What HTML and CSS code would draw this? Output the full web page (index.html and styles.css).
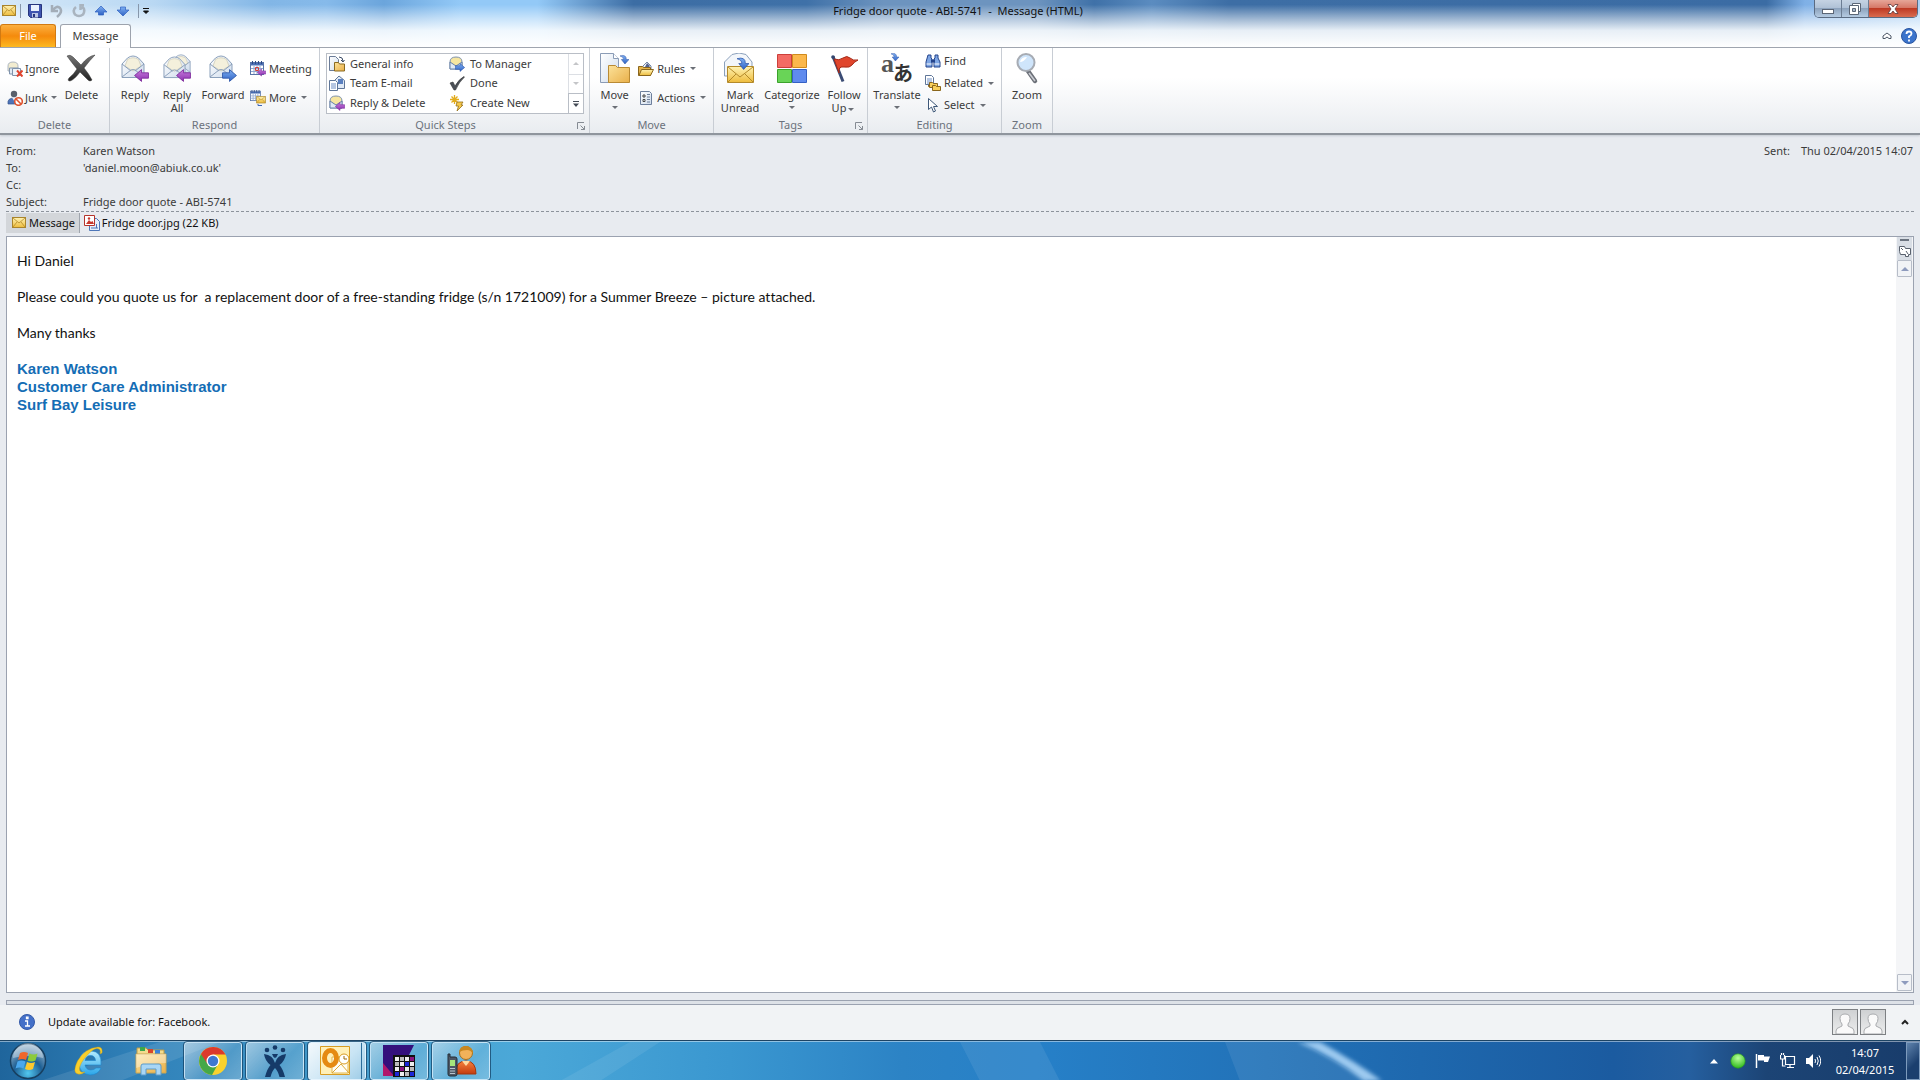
FILE: index.html
```html
<!DOCTYPE html>
<html lang="en">
<head>
<meta charset="utf-8">
<title>Fridge door quote - ABI-5741 - Message (HTML)</title>
<link rel="stylesheet" href="styles.css">
</head>
<body>
<svg class="defs" width="0" height="0" aria-hidden="true">
  <defs>
    <linearGradient id="gold" x1="0" y1="0" x2="0" y2="1"><stop offset="0" stop-color="#fff3b4"/><stop offset="1" stop-color="#eebc3c"/></linearGradient>
    <linearGradient id="folder" x1="0" y1="0" x2="1" y2="1"><stop offset="0" stop-color="#fce29a"/><stop offset="1" stop-color="#e9b04a"/></linearGradient>
    <linearGradient id="paper" x1="0" y1="0" x2="1" y2="1"><stop offset="0" stop-color="#ffffff"/><stop offset="1" stop-color="#cfdcec"/></linearGradient>
    <linearGradient id="purple" x1="0" y1="0" x2="0" y2="1"><stop offset="0" stop-color="#c77ddb"/><stop offset="1" stop-color="#8b2fb0"/></linearGradient>
    <linearGradient id="blue" x1="0" y1="0" x2="0" y2="1"><stop offset="0" stop-color="#7fb0f2"/><stop offset="1" stop-color="#2f62c4"/></linearGradient>
    <linearGradient id="dark" x1="0" y1="0" x2="0" y2="1"><stop offset="0" stop-color="#777"/><stop offset="1" stop-color="#222"/></linearGradient>
    <radialGradient id="orb" cx=".5" cy=".85" r=".8"><stop offset="0" stop-color="#52c8f0"/><stop offset=".5" stop-color="#1d5f94"/><stop offset="1" stop-color="#9db9cf"/></radialGradient>
    <linearGradient id="ie" x1="0" y1="0" x2="0" y2="1"><stop offset="0" stop-color="#b5ecff"/><stop offset="1" stop-color="#2aa5e8"/></linearGradient>
    <radialGradient id="green" cx=".5" cy=".3" r=".7"><stop offset="0" stop-color="#b8ff9a"/><stop offset="1" stop-color="#2fb91c"/></radialGradient>
    <linearGradient id="person" x1="0" y1="0" x2="0" y2="1"><stop offset="0" stop-color="#f5813c"/><stop offset="1" stop-color="#c43c10"/></linearGradient>
    <symbol id="envelope" viewBox="0 0 14 12"><rect x=".5" y=".5" width="13" height="10" fill="url(#gold)" stroke="#a9842c"/><path d="M1 1l6 5 6-5M1 10l4-5M13 10l-4-5" fill="none" stroke="#b48a2a" stroke-width=".8"/></symbol>
    <symbol id="open-mail" viewBox="0 0 24 24"><path d="M1 9L6.500 3Q12-1 17.500 3L23 9V22.500H1z" fill="url(#paper)" stroke="#8ba0bb"/><path d="M4 11L6.500 4.500Q12 1 17.500 4.500L20 11l-8 5z" fill="#f4f0dc" stroke="#c9c7b4" stroke-width=".7"/><path d="M1 9l9 7M23 9l-9 7M1 22l9-7q2-1 4 0l9 7" fill="none" stroke="#8ba0bb"/></symbol>
    <symbol id="arrow-left" viewBox="0 0 14 12"><path d="M.5 6L7 .5V3.500H13.500V8.500H7V11.500z" fill="url(#purple)" stroke="#7d2a9c" stroke-width=".8"/></symbol>
    <symbol id="arrow-right" viewBox="0 0 14 12"><path d="M13.500 6L7 .5V3.500H.5V8.500H7V11.500z" fill="url(#blue)" stroke="#2c55a8" stroke-width=".8"/></symbol>
    <symbol id="curl" viewBox="0 0 10 10"><path d="M0 1Q7-1 7 5h3L5.500 10 1.500 5H4Q4 2 0 1z" fill="url(#blue)" stroke="#2c55a8" stroke-width=".6"/></symbol>
    <symbol id="calendar" viewBox="0 0 14 14"><rect x=".5" y="1.500" width="13" height="12" fill="#fff" stroke="#5874a8"/><path d="M1 2h12v2.500H1z" fill="#4a6fb4"/><path d="M2.500 0v3M5.500 0v3M8.500 0v3M11.500 0v3" stroke="#2d4a86"/><path d="M1 7.500h12M1 10.500h12M4 5v8M7 5v8M10 5v8" stroke="#91a8d0"/></symbol>
    <symbol id="launcher" viewBox="0 0 8 8"><path d="M.5 7V.5H7M3.500 3.500l4 4M7.500 4v3.500H4" fill="none" stroke="#858b93"/></symbol>
    <symbol id="avatar" viewBox="0 0 24 24"><path d="M3 24v-3q0-3 4-4l2-1v-2Q7 12 7 8.500 7 4 12 4t5 4.500Q17 12 15 14v2l2 1q4 1 4 4v3z" fill="#fafafa" stroke="#a9abae"/></symbol>
  </defs>
</svg>

<header class="titlebar">
  <div class="caption">
    <div class="quick-access">
      <svg class="qi mail" viewBox="0 0 14 12"><use href="#envelope"/></svg>
      <span class="sep"></span>
      <button aria-label="Save"><svg class="qi" viewBox="0 0 14 14"><path d="M.5.500h13v13h-11l-2-2z" fill="#3f55b0" stroke="#27357c"/><path d="M3 1h8v6H3z" fill="#eaf2fd"/><path d="M4 9h6v4.500H4z" fill="#bcc8e6"/><path d="M5 10h2v3H5z" fill="#27357c"/></svg></button>
      <button aria-label="Undo"><svg class="qi" viewBox="0 0 14 14"><path d="M2 1v6h6M3 6q4-5 7-2 3 4-3 9" fill="none" stroke="#a3adb8" stroke-width="2.500"/></svg></button>
      <button aria-label="Repeat"><svg class="qi" viewBox="0 0 14 14"><path d="M4 3Q0 6 3 10.500q4 3 8 0 3-5-1-8M12 1H8.500v5" fill="none" stroke="#a9b4bf" stroke-width="2.500"/></svg></button>
      <button aria-label="Previous item"><svg class="qi" viewBox="0 0 14 14"><path d="M7 2l6 6H9.500v3h-5V8H1z" fill="url(#blue)" stroke="#2c5fc0" stroke-width=".7"/></svg></button>
      <button aria-label="Next item"><svg class="qi" viewBox="0 0 14 14"><path d="M7 12L1 6h3.500V3h5v3H13z" fill="url(#blue)" stroke="#2c5fc0" stroke-width=".7"/></svg></button>
      <span class="sep"></span>
      <button class="narrow" aria-label="Customize toolbar"><svg width="8" height="8" viewBox="0 0 8 8"><path d="M1 1.500h6M1.500 4h5L4 6.500z" fill="#111" stroke="#111" stroke-width="1"/></svg></button>
    </div>
    <h1>Fridge door quote - ABI-5741  -  Message (HTML)</h1>
    <div class="window-buttons">
      <button aria-label="Minimize"><svg width="14" height="14" viewBox="0 0 14 14"><rect x="1.500" y="7.500" width="11" height="4" fill="#fff" stroke="#5b6676"/></svg></button>
      <button aria-label="Restore"><svg width="14" height="14" viewBox="0 0 14 14"><path d="M4.500 1.500h8v8h-8z" fill="#fff" stroke="#5b6676"/><path d="M1.500 3.500h9v9h-9z" fill="#fff" stroke="#5b6676"/><path d="M4.500 6.500h3v3h-3z" fill="#aab8ca" stroke="#5b6676"/></svg></button>
      <button class="close" aria-label="Close"><svg width="12" height="12" viewBox="0 0 12 12"><path d="M1 1.500h3L6 4l2-2.500h3L8 6l3 4.500H8L6 8l-2 2.500H1L4 6z" fill="#fff" stroke="#5a3a3c" stroke-width=".8"/></svg></button>
    </div>
  </div>
  <nav class="tabs">
    <button class="tab file">File</button>
    <button class="tab active">Message</button>
    <div class="tab-tools">
      <button aria-label="Minimize the ribbon"><svg width="10" height="8" viewBox="0 0 10 8"><path d="M1 4l4-3 4 3v2.500H7L5 5 3 6.500H1z" fill="#fff" stroke="#4b5666"/></svg></button>
      <button aria-label="Help"><svg width="16" height="16" viewBox="0 0 16 16"><circle cx="8" cy="8" r="7.500" fill="#3b74cc" stroke="#2a55a0"/><path d="M5.500 6q0-2.500 2.500-2.500t2.500 2.200Q10.500 7 8 8.500v1.500M8 11.500v2" fill="none" stroke="#fff" stroke-width="1.800"/></svg></button>
    </div>
  </nav>
</header>

<section class="ribbon" aria-label="Ribbon">
  <section class="group g-delete">
    <div class="tools">
      <div class="stack">
        <button class="small"><svg viewBox="0 0 16 16"><path d="M1 5q0-4 5-4t5 4v5H1z" fill="#f2ecd0" stroke="#9aa7b8" stroke-width=".8"/><path d="M2.500 7h9v6h-9z" fill="#e3ebf4" stroke="#7f93ad"/><path d="M5.500 7.500h8v7h-8z" fill="#eef3f9" stroke="#7f93ad"/><path d="M10 9.500l5.500 6M15.500 9.500l-5.500 6" stroke="#e2452f" stroke-width="2"/></svg>Ignore</button>
        <button class="small"><svg viewBox="0 0 16 16"><circle cx="7" cy="4" r="3.200" fill="#595f6b"/><path d="M1 14q-1-6 6-6 5 0 5 6z" fill="#4e74b8" stroke="#35548c" stroke-width=".7"/><path d="M5 7.500h3.500l-1 4z" fill="#e9edf4"/><circle cx="11.500" cy="11.500" r="3.800" fill="#fff" stroke="#e0532f" stroke-width="1.600"/><path d="M9 9l5 5" stroke="#e0532f" stroke-width="1.600"/></svg>Junk<i class="caret"></i></button>
      </div>
      <button class="large w44"><svg viewBox="0 0 32 32"><path d="M2 3Q5 1 8 4l8 8q7-9 14-10-5 5-11 13 5 6 8 12-2 2-4 0L15 19Q9 27 5 28q-3 0-1-3 5-4 8-9Q7 10 2 3z" fill="url(#dark)" stroke="#333" stroke-width=".5"/></svg><span>Delete</span></button>
    </div>
    <h2>Delete</h2>
  </section>
  <section class="group g-respond">
    <div class="tools">
      <button class="large w40"><svg viewBox="0 0 32 32"><use href="#open-mail" x="2" y="2" width="24" height="24"/><use href="#arrow-left" x="15" y="16" width="15" height="13"/></svg><span>Reply</span></button>
      <button class="large w44"><svg viewBox="0 0 32 32"><use href="#open-mail" x="10" y="0" width="20" height="22"/><use href="#open-mail" x="2" y="3" width="23" height="23"/><use href="#arrow-left" x="15" y="16" width="15" height="13"/></svg><span>Reply<br>All</span></button>
      <button class="large w48"><svg viewBox="0 0 32 32"><use href="#open-mail" x="2" y="2" width="24" height="24"/><use href="#arrow-right" x="15" y="16" width="15" height="13"/></svg><span>Forward</span></button>
      <div class="stack">
        <button class="small"><svg viewBox="0 0 16 16"><use href="#calendar" x="0" y="0" width="14" height="14"/><path d="M5.500 6.500h3v3h-3z" fill="none" stroke="#d03a3a"/><use href="#arrow-left" x="7" y="7" width="9" height="9"/></svg>Meeting</button>
        <button class="small"><svg viewBox="0 0 16 16"><use href="#calendar" x="0" y="0" width="11" height="11"/><use href="#envelope" x="6" y="6" width="10" height="8"/><path d="M8 14v1.500h4" fill="none" stroke="#3a66b8"/></svg>More<i class="caret"></i></button>
      </div>
    </div>
    <h2>Respond</h2>
  </section>
  <section class="group g-quick">
    <div class="tools">
      <div class="gallery">
        <div class="steps">
          <button class="small"><svg viewBox="0 0 16 16"><path d="M.5.500h6l3 3v11h-9z" fill="url(#paper)" stroke="#6b7c98"/><path d="M5.500 6.500h4l1 1.500h5v7h-10z" fill="url(#folder)" stroke="#8a6a20"/><path d="M10 1q4 0 4 4m-2-1l2 2 1.500-2" fill="none" stroke="#3a4a66"/></svg>General info</button>
          <button class="small"><svg viewBox="0 0 16 16"><path d="M5.500 5.500L10 1l5.500 4.500v8h-10z" fill="#dfe9f6" stroke="#5f7698"/><path d="M9 4h5v5H9z" fill="#5a80c0"/><path d="M.5 5.500h6l2 2v8h-8z" fill="#fff" stroke="#5f7698"/><path d="M2 9h5M2 11h5M2 13h5" stroke="#6f8fc4"/></svg>Team E-mail</button>
          <button class="small"><svg viewBox="0 0 16 16"><path d="M1 6q0-5 6-5t6 5v7H1z" fill="#f7e6a0" stroke="#7f93ad"/><path d="M1 6l6 4 6-4v7H1z" fill="#dfe9f6" stroke="#6681a8"/><use href="#arrow-left" x="6" y="7" width="10" height="9"/></svg>Reply &amp; Delete</button>
          <button class="small"><svg viewBox="0 0 16 16"><path d="M1 6q0-5 6-5t6 5v7H1z" fill="#f7e6a0" stroke="#7f93ad"/><path d="M1 6l6 4 6-4v7H1z" fill="#dfe9f6" stroke="#6681a8"/><use href="#arrow-right" x="6" y="7" width="10" height="9"/></svg>To Manager</button>
          <button class="small"><svg viewBox="0 0 16 16"><path d="M1 8l3-1 2 4q4-7 9-9.500l.5.500Q10 7 6.500 15H5z" fill="#4a4f57" stroke="#333" stroke-width=".6"/></svg>Done</button>
          <button class="small"><svg viewBox="0 0 16 16"><path d="M5.500 0v9M1 4.500h9M2.500 1.500l6 6M8.500 1.500l-6 6" stroke="#e2ac1e" stroke-width="1.300"/><path d="M8 7h6l-2 3h2l-6 6 1.500-5H7z" fill="#f5c84a" stroke="#96701a" stroke-width=".8"/></svg>Create New</button>
        </div>
        <div class="gallery-scroll">
          <button disabled aria-label="Scroll up"><i class="caret up"></i></button>
          <button disabled aria-label="Scroll down"><i class="caret"></i></button>
          <button aria-label="More quick steps"><svg width="6" height="6" viewBox="0 0 6 6"><path d="M0 0h6v1H0zM0 2.500h6L3 6z" fill="#444b55"/></svg></button>
        </div>
      </div>
    </div>
    <h2>Quick Steps</h2>
    <button class="launch" aria-label="Quick Steps options"><svg width="8" height="8"><use href="#launcher"/></svg></button>
  </section>
  <section class="group g-move">
    <div class="tools">
      <button class="large w44"><svg viewBox="0 0 32 32"><path d="M1.500.500h13l5 5v24h-18z" fill="url(#paper)" stroke="#8b9cb6"/><path d="M14.500.500v5h5" fill="#fff" stroke="#8b9cb6"/><path d="M9.500 12.500h7l2 2h12v15h-21z" fill="url(#folder)" stroke="#b98a34"/><use href="#curl" x="21" y="1" width="9" height="11"/></svg><span>Move<i class="caret below"></i></span></button>
      <div class="stack">
        <button class="small"><svg viewBox="0 0 16 16"><path d="M5 5l4-4 4 4v5H5z" fill="#f3f6fa" stroke="#7386a6"/><path d="M9 2l3 3-3 3-2-2z" fill="#53618c"/><path d="M.5 5.500h4l1 1h7v8H.5z" fill="#e5b349" stroke="#8a661c"/><path d="M1 14.500l2.500-6h12l-3 6z" fill="url(#gold)" stroke="#8a661c"/></svg>Rules<i class="caret"></i></button>
        <button class="small"><svg viewBox="0 0 16 16"><path d="M2.500 1.500h9l2 2v11h-11z" fill="url(#paper)" stroke="#6d7f9c"/><path d="M5 5h2v2H5zM5 9.500h2v2H5z" fill="#fff" stroke="#444"/><path d="M9 4.500h3M9 7h3M9 9.500h3M9 12h3" stroke="#6e7f9a"/></svg>Actions<i class="caret"></i></button>
      </div>
    </div>
    <h2>Move</h2>
  </section>
  <section class="group g-tags">
    <div class="tools">
      <button class="large w44"><svg viewBox="0 0 32 32"><path d="M.5 9L8 1.500q7-3 14 0L28 9v14H.500z" fill="#f3f6fa" stroke="#8ba0bb"/><path d="M3.500 13.500h26v16h-26z" fill="url(#gold)" stroke="#b48a2a"/><path d="M4 14l12 10 13-10M4 29l8-8M29 29l-8-8" fill="none" stroke="#b48a2a"/><use href="#curl" x="13" y="4" width="12" height="13"/></svg><span>Mark<br>Unread</span></button>
      <button class="large w60"><svg viewBox="0 0 32 32"><path d="M1.500 1.500h14v13h-14z" fill="#f36b64" stroke="#cc3f3a"/><path d="M16.500 1.500h14v13h-14z" fill="#fbb84c" stroke="#d08a1c"/><path d="M1.500 16.500h14v13h-14z" fill="#69d457" stroke="#3ba22c"/><path d="M16.500 16.500h14v13h-14z" fill="#5f8bee" stroke="#3460c4"/></svg><span>Categorize<i class="caret below"></i></span></button>
      <button class="large w44"><svg viewBox="0 0 32 32"><path d="M5 3.500l10 25" stroke="#3b4c74" stroke-width="3"/><path d="M6 6q5 2 9-1t7 0 8 2q-4 2-6 5t-8 2-5 6z" fill="#e0452c" stroke="#a52a18"/><circle cx="5" cy="4" r="1.800" fill="#33456e"/></svg><span>Follow<br>Up<i class="caret"></i></span></button>
    </div>
    <h2>Tags</h2>
    <button class="launch" aria-label="Tags options"><svg width="8" height="8"><use href="#launcher"/></svg></button>
  </section>
  <section class="group g-edit">
    <div class="tools">
      <button class="large w52"><span class="translate"><b>a</b><b class="kana">あ</b><svg class="turn" viewBox="0 0 10 8"><use href="#curl" width="10" height="8"/></svg></span><span>Translate<i class="caret below"></i></span></button>
      <div class="stack tight">
        <button class="small"><svg viewBox="0 0 16 16"><path d="M3 2h3v3l1 1v8H1V9zM10 2h3v3l2 4v5H9V6l1-1z" fill="#7ea6e4" stroke="#24448c"/><path d="M6 6.500h4v3H6z" fill="#24448c"/><path d="M1.500 11h5M9.500 11h5" stroke="#fff"/></svg>Find</button>
        <button class="small"><svg viewBox="0 0 16 16"><path d="M3.500 5.500h5v6h-5z" fill="#f8cf5a" stroke="#8a661c"/><path d="M.5.500h6l2 2v7h-8z" fill="#fff" stroke="#5f7698"/><path d="M2 4h5M2 6h5M2 8h5" stroke="#6f8fc4"/><path d="M4.500 7.500h3l1 1h4v4h-8z" fill="#f8cf5a" stroke="#8a661c"/><path d="M7.500 10.500h3l1 1h4v4h-8z" fill="#f8cf5a" stroke="#8a661c"/></svg>Related<i class="caret"></i></button>
        <button class="small"><svg viewBox="0 0 16 16"><path d="M3.500 1.500v11l3-2.500 2 5 2-1-2-4.500h4z" fill="#fff" stroke="#3e5878"/></svg>Select<i class="caret"></i></button>
      </div>
    </div>
    <h2>Editing</h2>
  </section>
  <section class="group g-zoom">
    <div class="tools">
      <button class="large w48"><svg viewBox="0 0 32 32"><path d="M17 18l7 10" stroke="#6c7078" stroke-width="4.500" stroke-linecap="round"/><path d="M18 20l6 8" stroke="#c9ccd2" stroke-width="1.500"/><circle cx="15" cy="9.500" r="8.500" fill="#cfe5fb" stroke="#a7acb4" stroke-width="2"/><path d="M9 9q1-5 7-5-3 5-7 5z" fill="#fff"/></svg><span>Zoom</span></button>
    </div>
    <h2>Zoom</h2>
  </section>
</section>

<main class="message">
  <div class="headers">
    <dl>
      <dt>From:</dt><dd>Karen Watson</dd>
      <dt>To:</dt><dd>'daniel.moon@abiuk.co.uk'</dd>
      <dt>Cc:</dt><dd></dd>
      <dt>Subject:</dt><dd>Fridge door quote - ABI-5741</dd>
    </dl>
    <dl class="sent"><dt>Sent:</dt><dd>Thu 02/04/2015 14:07</dd></dl>
  </div>
  <div class="attachments">
    <button class="att selected"><svg width="14" height="12"><use href="#envelope"/></svg>Message</button>
    <button class="att"><svg width="16" height="16" viewBox="0 0 16 16"><path d="M5.500 3.500h7l3 3v9h-10z" fill="#e5eefb" stroke="#4d76b8"/><path d="M7 13h7M12.500 9v4" stroke="#4d76b8"/><path d="M.5.500h10v10H.500z" fill="#fff" stroke="#b5342c"/><path d="M2 9l3-4 2 2 1.500-1L10 9z" fill="#c8372c"/><circle cx="5" cy="3.500" r="1.200" fill="#c8372c"/></svg>Fridge door.jpg (22 KB)</button>
  </div>
  <div class="pane">
    <article>
      <p>Hi Daniel</p>
      <p>Please could you quote us for&nbsp; a replacement door of a free-standing fridge (s/n 1721009) for a Summer Breeze – picture attached.</p>
      <p>Many thanks</p>
      <address>Karen Watson<br>Customer Care Administrator<br>Surf Bay Leisure</address>
    </article>
    <div class="scrollbar">
      <div class="browse"><svg width="12" height="20" viewBox="0 0 12 20"><path d="M1 0h9v2H1z" fill="#6c7480"/><path d="M.500 7.500h5l1 2h5v6h-2v2h-3v-2h-5l-1-3z" fill="#fff" stroke="#59616d"/><path d="M2 9l2 2M7 12l2 3" stroke="#59616d"/></svg></div>
      <button aria-label="Scroll up"><i class="thumb-arrow up"></i></button>
      <div class="track"></div>
      <button aria-label="Scroll down"><i class="thumb-arrow"></i></button>
    </div>
  </div>
  <div class="splitter"></div>
</main>

<footer class="people">
  <svg width="16" height="16" viewBox="0 0 16 16"><circle cx="8" cy="8" r="7.500" fill="#4470c8" stroke="#345aa8"/><path d="M6 7h2.500v5M6 12h5M7.500 3.200h1.500v1.500h-1.500z" fill="none" stroke="#fff" stroke-width="1.300"/></svg>
  <span>Update available for: Facebook.</span>
  <div class="contacts">
    <svg class="contact" viewBox="0 0 24 24"><use href="#avatar"/></svg>
    <svg class="contact" viewBox="0 0 24 24"><use href="#avatar"/></svg>
    <button aria-label="Expand people pane"><svg width="8" height="6" viewBox="0 0 8 6"><path d="M1 5l3-3 3 3" fill="none" stroke="#222" stroke-width="2"/></svg></button>
  </div>
</footer>

<nav class="taskbar" aria-label="Taskbar">
  <svg class="wall" viewBox="0 0 1920 40" preserveAspectRatio="none" aria-hidden="true">
    <path d="M40 40L160 0h60L120 40z" fill="#fff" opacity=".1"/>
    <path d="M560 40L630 0h30L600 40zM960 0h80l20 40H980z" fill="#fff" opacity=".08"/>
    <path d="M1225 0h75l70 40h-130z" fill="#fff" opacity=".08"/>
    <path class="glow" d="M1298 0h22q35 20 62 40h-18q-30-25-66-40z" fill="#b4dbfb" opacity=".85"/>
  </svg>
  <button class="task start" aria-label="Start"><svg width="38" height="38" viewBox="0 0 38 38"><circle cx="19" cy="19" r="17.500" fill="url(#orb)" stroke="#173f60" stroke-width="1.500"/><path d="M4 16a15 15 0 0 1 30 0q-15-4-30 0z" fill="#fff" opacity=".35"/><path d="M11 11q4-2 8 0l-2 7q-4-2-8 0z" fill="#f0672c"/><path d="M20.500 11.500q4 2 8 0l-2 7q-4 2-8 0z" fill="#8ccb3c"/><path d="M8.500 19.500q4-2 8 0l-2 7q-4-2-8 0z" fill="#4aa8ee"/><path d="M18 20q4 2 8 0l-2 7q-4 2-8 0z" fill="#fcc92e"/></svg></button>
  <button class="task" aria-label="Internet Explorer"><svg width="32" height="32" viewBox="0 0 32 32"><path d="M28 20H12q1 5 6 5 3 0 5-2h5q-3 7-11 7Q6 29 6 17.500 7 6 17.500 6 29 6 28 20zM12 15.500h10.500Q22 10.500 17.500 10.500T12 15.500z" fill="url(#ie)" stroke="#1c86cf" stroke-width=".6"/><path d="M29 8q1-6-4-6Q12 3 4.500 16-1 28 5 29q3 1 7-2-4 1-5-1-2-4 4-12Q21 1 26 4q2 1 1 5z" fill="#f8cf2c" stroke="#c99a12" stroke-width=".4"/></svg></button>
  <button class="task" aria-label="Explorer"><svg width="34" height="32" viewBox="0 0 34 32"><path d="M3 3h9l2 2h16v22H3z" fill="#f3dc8e" stroke="#b99a48"/><path d="M6 2h5v4H6z" fill="#3da84b"/><path d="M14 4h5v4h-5z" fill="#d8442c"/><path d="M21 5h5v4h-5z" fill="#3b82d8"/><path d="M2 9h30v19H2z" fill="url(#folder)" stroke="#c9a552"/><path d="M2 9h30v9q-15 0-30 5z" fill="#fff" opacity=".35"/><path d="M7 30v-9q0-2 2-2h16q2 0 2 2v9h-5v-6H12v6z" fill="#a9d6f5" stroke="#5b9bcb"/></svg></button>
  <button class="task open" aria-label="Chrome"><svg width="30" height="30" viewBox="0 0 30 30"><circle cx="15" cy="15" r="14" fill="#f9d22e"/><path d="M3 8A14 14 0 0 0 14 29l6-11-5-3z" fill="#45a847"/><path d="M3 8A14 14 0 0 1 27.500 8.500H15L9.500 18z" fill="#dc3a2c"/><circle cx="15" cy="15" r="6.500" fill="#fff"/><circle cx="15" cy="15" r="5.200" fill="#3f78d0"/></svg></button>
  <button class="task open" aria-label="Jira"><svg width="28" height="34" viewBox="0 0 28 34"><g fill="#153a68"><circle cx="6" cy="6" r="2.300"/><circle cx="14" cy="3.500" r="2.300"/><circle cx="22" cy="6" r="2.300"/><path d="M3 10q9 1 11 9 2-8 11-9-1 7-6.500 11Q22 25 24 33h-5.500Q17 27 14 24q-3 3-4.500 9H4q2-8 5.500-12Q4 17 3 10zM11 10h6q-1 3-3 4-2-1-3-4z"/></g></svg></button>
  <button class="task open current" aria-label="Outlook"><svg width="32" height="32" viewBox="0 0 32 32"><path d="M1.500 1.500h29v28h-29z" fill="#fff0b8" stroke="#d89c22"/><path d="M13 12h16v16H13z" fill="#fffdf4" stroke="#e2b64e"/><path d="M13 28l9-9 8 9" fill="none" stroke="#dca93a"/><ellipse cx="11.500" cy="13" rx="6" ry="7.500" fill="none" stroke="#e58a12" stroke-width="5"/><circle cx="25" cy="14" r="5" fill="#fff" stroke="#d89c22"/><path d="M25 11v3h3" fill="none" stroke="#9a6a10"/></svg></button>
  <button class="task open" aria-label="Database"><svg width="34" height="34" viewBox="0 0 34 34"><path d="M1 1h31l-5 10H12v21H1z" fill="#34107c"/><path d="M1 19l11 13H1z" fill="#b0186c"/><path d="M11 11h22v22H11z" fill="#111"/><path d="M13 13h4v4h-4zM18 18h4v4h-4zM23 13h4v4h-4zM13 23h4v4h-4zM28 18h4v4h-4zM23 23h4v4h-4zM18 28h4v4h-4z" fill="#eee"/><path d="M18 13h4v4h-4zM13 18h4v4h-4zM28 23h4v4h-4zM23 28h4v4h-4z" fill="#bbb"/><path d="M28 13h4v4h-4zM18 23h4v4h-4z" fill="#8a1480"/><path d="M23 18h4v4h-4zM13 28h4v4h-4zM28 28h4v4h-4z" fill="#1c28d8"/></svg></button>
  <button class="task open" aria-label="Phone"><svg width="32" height="32" viewBox="0 0 32 32"><circle cx="21" cy="8" r="6.500" fill="#f2b25a" stroke="#a8701c"/><path d="M14 7q1-7 8-6 6 1 6 8-2-4-6-4t-8 2z" fill="#c9871f"/><path d="M11 29q-1-13 10-13 10 0 10 13z" fill="url(#person)" stroke="#a5360c"/><path d="M17 16l4 5 4-5z" fill="#ffd9a0"/><path d="M3 9h2v3h5q2 0 2 2v15q0 2-2 2H5q-2 0-2-2z" fill="#4d5866" stroke="#242c36"/><path d="M5 15h5v6H5z" fill="#a6e67c"/><path d="M5 23.500h5M5 26h5M5 28.500h5" stroke="#b9c3cf"/></svg></button>
  <div class="tray">
    <svg width="8" height="6" viewBox="0 0 8 6"><path d="M0 5.500L4 1l4 4.500z" fill="#fff"/></svg>
    <svg width="16" height="16" viewBox="0 0 16 16"><circle cx="8" cy="8" r="7.200" fill="url(#green)" stroke="#2b9a20" stroke-width=".6"/></svg>
    <svg width="16" height="16" viewBox="0 0 16 16"><path d="M1.500 1v14" stroke="#fff" stroke-width="1.500"/><path d="M3 2h6v1.500h6L13 9H9V7.500H3z" fill="#fff"/></svg>
    <svg width="16" height="16" viewBox="0 0 16 16"><path d="M5.500 3.500h9v8h-9zM7 14.500h7M10 12v2M.5 2v4h4V2M1.500 0v2M3.500 0v2M2.500 6v7h3" fill="none" stroke="#fff" stroke-width="1.200"/></svg>
    <svg width="16" height="16" viewBox="0 0 16 16"><path d="M1 5h3l4-4v14l-4-4H1z" fill="#fff"/><path d="M10 6q1 2 0 4M12 4q2.500 4 0 8M14 2.500q3.500 5.500 0 11" fill="none" stroke="#fff"/></svg>
  </div>
  <time datetime="2015-04-02T14:07">14:07<br>02/04/2015</time>
  <button class="desktop" aria-label="Show desktop"></button>
</nav>
</body>
</html>
```

FILE: styles.css
```css
* { box-sizing: border-box; }

body {
  margin: 0;
  min-height: 100vh;
  display: flex;
  flex-direction: column;
  background: #e8ebf0;
  color: #3b3b3b;
  font: 11px/14px "Noto Sans", "Open Sans", sans-serif;
}

button {
  margin: 0;
  padding: 0;
  border: 0;
  background: none;
  color: inherit;
  font: inherit;
}

h1, h2, p, dl, dd { margin: 0; font: inherit; }
svg { display: block; flex: none; }
.defs { height: 0; }

/* Title bar */
.titlebar {
  border-bottom: 1px solid #9da3ad;
  background:
    linear-gradient(to bottom, transparent 10%, rgba(255, 255, 255, .5) 40%, rgba(250, 253, 255, .9) 65%, #fff),
    linear-gradient(to right, #d5e8f8 0, #b9d8f3 8%, #82b6e6 14%, #86baea 17%, #6ba5dc 20%, #93c9f7 24%, #93c9f7 28%, #3c6da4 33%, #3f71a8 42%, #6d94bf 46%, #6d94bf 54%, #3f71a8 57%, #5b8cc0 60%, #3d6ea5 64%, #3b6ca4 92%, #7fb0e6 94%, #a9d0f5 100%);
}

.caption { display: grid; grid-template-columns: 1fr auto 1fr; height: 24px; }
.caption h1 { padding: 3px 4px 0 0; color: #111; line-height: 16px; white-space: pre; }
.quick-access { display: flex; align-items: center; gap: 8px; padding-left: 2px; height: 22px; }
.quick-access .qi { width: 14px; height: 14px; }
.quick-access .mail { height: 12px; margin-right: -4px; }
.sep { width: 1px; height: 14px; margin-right: -1px; background: #8797ab; }
.quick-access .narrow { margin-left: -4px; }

.window-buttons {
  justify-self: end;
  display: flex;
  height: 18px;
  margin-right: 2px;
  border: 1px solid #5a6b82;
  border-top: 0;
  border-radius: 0 0 5px 5px;
  overflow: hidden;
}
.window-buttons button {
  display: grid;
  place-items: center;
  width: 27px;
  border-right: 1px solid #6c7d93;
  background: linear-gradient(#c5d3e3, #b0c2d7 45%, #8da3bd 50%, #b5cbe2);
}
.window-buttons .close {
  width: 48px;
  border: 0;
  background: linear-gradient(#e6a698, #d67867 45%, #be3a24 50%, #d96c50);
}

.tabs { display: flex; align-items: flex-end; gap: 4px; height: 23px; }
.tab { height: 23px; border-radius: 3px 3px 0 0; }
.file {
  width: 56px;
  border: 1px solid #d17a12;
  border-bottom: 0;
  background: linear-gradient(#fbb040, #f58a0c 50%, #fdb921);
  color: #fff;
}
.tab.active {
  width: 71px;
  height: 24px;
  margin-bottom: -1px;
  padding-bottom: 1px;
  border: 1px solid #9da3ad;
  border-bottom: 0;
  background: #fff;
}
.tab-tools { display: flex; align-items: center; align-self: center; gap: 9px; margin-left: auto; padding-right: 3px; }

/* Ribbon */
.ribbon {
  display: flex;
  height: 87px;
  border-bottom: 2px solid #8f959d;
  background: linear-gradient(#fff 0, #fff 35%, #e9ecf0 100%);
  box-shadow: 0 1px 2px #c5cad2;
}
.group {
  position: relative;
  display: flex;
  flex-direction: column;
  padding-bottom: 1px;
  border-right: 1px solid #c8cdd4;
}
.group h2 { color: #6b727c; line-height: 15px; text-align: center; }
.tools { display: flex; flex: 1; padding: 1px 5px 0; }

.g-delete { width: 110px; }
.g-respond { width: 210px; }
.g-quick { width: 270px; }
.g-quick h2 { padding-right: 18px; }
.g-move { width: 124px; }
.g-tags { width: 154px; }
.g-edit { width: 134px; }
.g-zoom { width: 51px; }
.g-zoom .tools { padding: 1px 1px 0; }

.large { display: flex; flex-direction: column; align-items: center; gap: 3px; padding-top: 4px; line-height: 13px; }
.large svg { width: 32px; height: 32px; }
.w40 { width: 40px; }
.w44 { width: 44px; }
.w48 { width: 48px; }
.w52 { width: 52px; }
.w60 { width: 60px; }
.g-tags .tools { padding-right: 0; padding-left: 4px; }

.stack { display: flex; flex-direction: column; justify-content: center; gap: 7px; }
.stack.tight { gap: 0; }
.large + .stack { padding-left: 2px; }
.g-respond .large + .stack { padding-left: 1px; }
.small { display: flex; align-items: center; gap: 3px; height: 22px; padding-left: 2px; white-space: nowrap; }
.small svg { width: 16px; height: 16px; }
.g-delete .small { gap: 2px; }
.g-delete .small .caret { margin-right: 0; }

.caret {
  display: inline-block;
  margin: 0 2px;
  border: 3px solid transparent;
  border-top-color: #6b6f76;
  border-bottom: 0;
  vertical-align: middle;
}
.caret.below { display: block; width: 6px; margin: 5px auto 0; }
.caret.up { border-top: 0; border-bottom: 3px solid #6b6f76; }

.gallery { display: flex; flex: 1; height: 61px; margin: 4px 0 0 1px; border: 1px solid #b9bec6; background: #fff; }
.steps { flex: 1; display: grid; grid-template: repeat(3, 1fr) / 120px 1fr; grid-auto-flow: column; }
.steps .small { gap: 5px; height: 19px; }
.gallery-scroll { display: grid; grid-template-rows: repeat(3, 1fr); width: 15px; }
.gallery-scroll button { display: grid; place-items: center; border: 1px solid #b9bec6; border-width: 1px 0 0 1px; }
.gallery-scroll button:first-child { border-top: 0; }
.gallery-scroll button:disabled { border-color: #dcdfe4; }
.gallery-scroll button:disabled .caret { opacity: .4; }
.launch { position: absolute; right: 4px; bottom: 3px; }

/* Translate icon: two overlapping glyphs and a turning arrow */
.translate { position: relative; display: block; width: 32px; height: 32px; color: #555; font: 26px/22px "Liberation Serif", serif; text-align: left; }
.translate .kana { position: absolute; right: 0; bottom: 1px; color: #333; font: bold 20px/22px "Noto Sans CJK JP", sans-serif; }
.translate .turn { position: absolute; top: 0; left: 9px; width: 10px; height: 8px; }

/* Message */
.message { flex: 1; display: flex; flex-direction: column; padding: 7px 6px 0; }
.headers { display: flex; justify-content: space-between; padding-bottom: 1px; border-bottom: 1px dashed #8d939c; }
.headers dl { display: grid; grid-template-columns: 77px auto; grid-auto-rows: 17px; line-height: 17px; }
.headers .sent { grid-template-columns: auto auto; column-gap: 11px; padding-right: 1px; }

.attachments { display: flex; align-items: center; gap: 4px; height: 24px; padding-bottom: 3px; color: #111; }
.att { display: flex; align-items: center; gap: 2px; height: 20px; }
.att.selected { gap: 3px; padding: 0 4px 0 6px; border-right: 1px solid #9fa5ae; background: #d3d6da; }

.pane { flex: 1; display: flex; border: 1px solid #9ba2b0; background: #fff; }
article { flex: 1; padding: 15px 10px; color: #111; font: 14px/18px Lato, sans-serif; font-variant-ligatures: none; }
article p { margin-bottom: 18px; }
address { color: #146db5; font: bold 15px/18px "Liberation Sans", Arial, sans-serif; }

.scrollbar { display: flex; flex-direction: column; width: 17px; padding: 0 1px 1px; background: #f4f5f7; }
.scrollbar button { display: grid; place-items: center; height: 17px; border: 1px solid #b7bdc8; border-radius: 1px; background: #f1f3f6; }
.browse { display: flex; justify-content: center; height: 23px; padding-top: 2px; background: #d9dee5; }
.track { flex: 1; }
.thumb-arrow { border: 4px solid transparent; border-top-color: #8e9bbd; border-bottom: 0; }
.thumb-arrow.up { border-top: 0; border-bottom: 4px solid #8e9bbd; }
.splitter { height: 5px; margin-top: 7px; border: 1px solid #9ba2b0; background: #dde1e7; }

/* People pane */
.people { display: flex; align-items: center; gap: 13px; height: 35px; padding: 0 11px 2px 19px; background: #f1f3f5; color: #111; }
.contacts { display: flex; align-items: center; gap: 2px; margin-left: auto; }
.contact { width: 26px; height: 26px; border: 1px solid #7d8083; background: linear-gradient(#cfd1d3, #eceded); }
.contacts button { margin-left: 13px; }

/* Taskbar */
.taskbar {
  position: relative;
  display: flex;
  align-items: center;
  gap: 4px;
  height: 40px;
  border-top: 1px solid #1d4464;
  background: linear-gradient(to right, #1f659c 0, #2f80b8 7%, #48a0cf 20%, #4ba8d8 27%, #3a97d0 38%, #2c83c5 47%, #2680c8 54%, #2272b8 66%, #1e68ae 74%, #1b5ba0 84%, #255f9f 88%, #1c4475 92%, #183c6b 100%);
  box-shadow: inset 0 1px rgba(255, 255, 255, .45);
  color: #fff;
}
.wall { position: absolute; inset: 1px 0 0; width: 100%; height: 100%; }
.glow { filter: blur(2px); }
.task { position: relative; display: grid; place-items: center; width: 58px; height: 38px; }
.task.start { width: 56px; }
.task.open {
  border: 1px solid rgba(225, 243, 255, .75);
  border-radius: 3px;
  background: linear-gradient(135deg, rgba(255, 255, 255, .5), rgba(255, 255, 255, .12) 60%, rgba(255, 255, 255, .25));
  outline: 1px solid rgba(15, 60, 95, .7);
}
.task.current {
  padding-right: 5px;
  background: linear-gradient(to right, transparent 52px, #2d6d9a 52px, #2d6d9a 53px, transparent 53px), linear-gradient(135deg, #f4f9fc, #c8e4f4 60%, #9ccbe6);
}
.tray { position: relative; display: flex; align-items: center; gap: 9px; margin: 0 3px 0 auto; }
.tray svg:first-child { margin-right: 3px; }
time { position: relative; width: 74px; line-height: 17px; text-align: center; }
.desktop { position: relative; width: 14px; height: 38px; border: 1px solid #7d9bbd; background: linear-gradient(135deg, #5f83ac, #1b3f6e 60%); }
```
